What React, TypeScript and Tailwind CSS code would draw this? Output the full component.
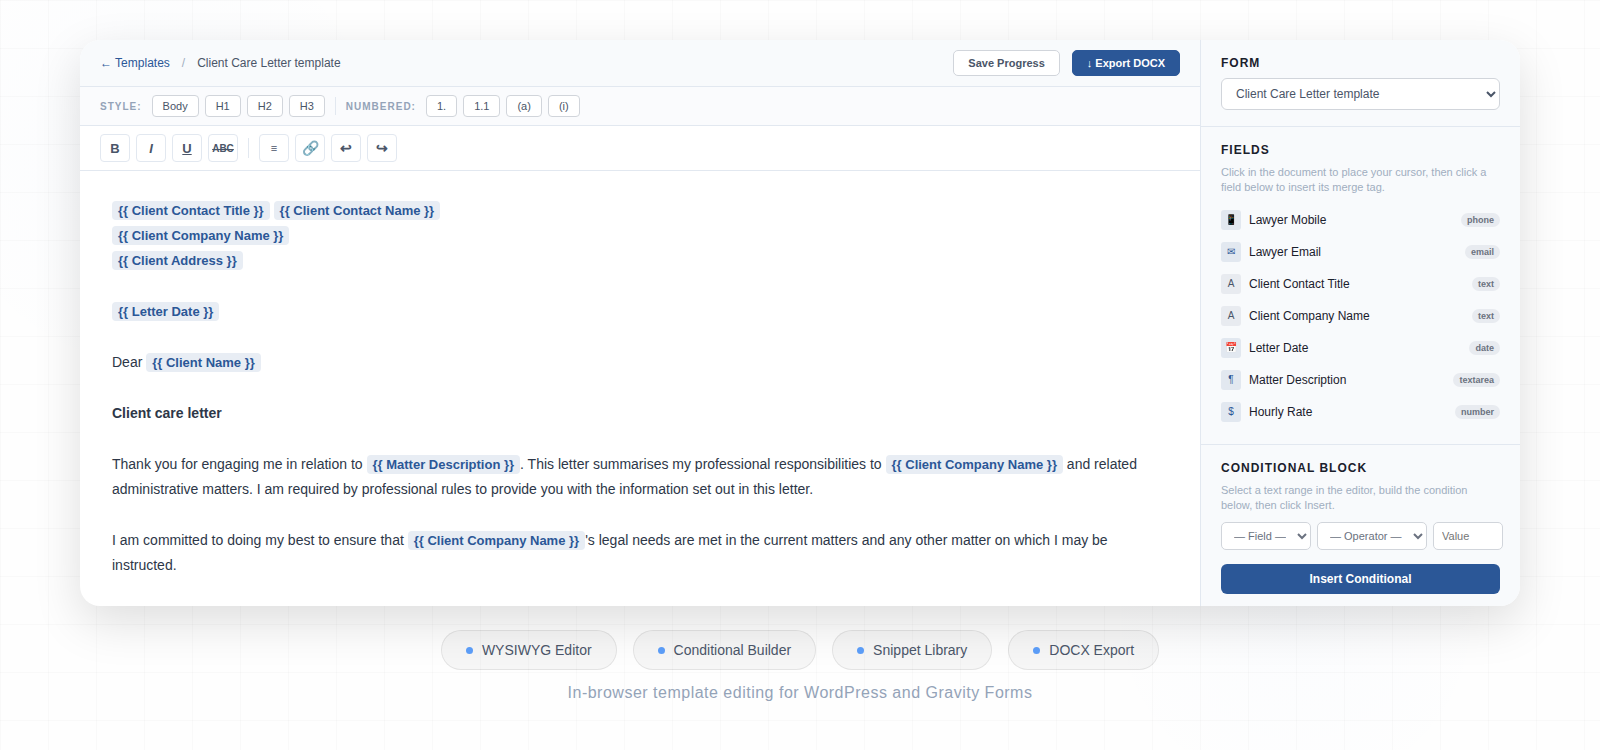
import { useState } from "react"
import type { ReactNode } from "react"

const fields = [
  { name: "Lawyer Mobile", type: "phone", icon: "📱" },
  { name: "Lawyer Email", type: "email", icon: "✉" },
  { name: "Client Contact Title", type: "text", icon: "A" },
  { name: "Client Company Name", type: "text", icon: "A" },
  { name: "Letter Date", type: "date", icon: "📅" },
  { name: "Matter Description", type: "textarea", icon: "¶" },
  { name: "Hourly Rate", type: "number", icon: "$" },
]

const textStyles = ["Body", "H1", "H2", "H3"]
const numberStyles = ["1.", "1.1", "(a)", "(i)"]

const formatTools = [
  { label: "Bold", content: "B", className: "text-[13px]" },
  { label: "Italic", content: "I", className: "text-[13px] italic" },
  { label: "Underline", content: "U", className: "text-[13px] underline" },
  { label: "Strikethrough", content: "ABC", className: "text-[10px] leading-[11px] line-through" },
]

const insertTools = [
  { label: "Align", content: "≡", className: "text-[11px]" },
  { label: "Link", content: "🔗", className: "text-[14px]" },
  { label: "Undo", content: "↩", className: "text-[14px]" },
  { label: "Redo", content: "↪", className: "text-[14px]" },
]

const features = ["WYSIWYG Editor", "Conditional Builder", "Snippet Library", "DOCX Export"]

function Tag({ children }: { children: string }) {
  return (
    <span className="rounded-[4px] bg-[#e8edf4] px-1.5 py-0.5 text-[13px] font-bold text-[#2b5797]">
      {`{{ ${children} }}`}
    </span>
  )
}

function StyleButton({ children }: { children: string }) {
  return (
    <button className="h-[22px] rounded-[4px] border border-[#d1d5db] bg-white px-2.5 text-[11px] leading-none text-[#4a5568]">
      {children}
    </button>
  )
}

function ToolButton({ tool }: { tool: { label: string; content: string; className: string } }) {
  return (
    <button
      aria-label={tool.label}
      className="flex h-7 w-[30px] items-center justify-center rounded-[4px] border border-[#e2e8f0] bg-white font-bold leading-none text-[#4a5568]"
    >
      <span className={tool.className}>{tool.content}</span>
    </button>
  )
}

function BarLabel({ children }: { children: string }) {
  return <span className="mr-1 text-[10px] font-bold tracking-[1px] text-[#94a3b8]">{children}</span>
}

function PanelTitle({ children }: { children: ReactNode }) {
  return <h2 className="mb-2 text-[12px] font-bold leading-[14px] tracking-[1px] text-[#1a202c]">{children}</h2>
}

function PanelHelp({ children }: { children: ReactNode }) {
  return <p className="mb-[9px] text-[11px] leading-[15px] text-[#a0aec0]">{children}</p>
}

export default function App() {
  const [form, setForm] = useState("Client Care Letter template")
  const [value, setValue] = useState("")

  return (
    <div className="min-h-screen bg-[#fefefe] bg-[radial-gradient(circle_at_10%_20%,rgba(59,130,246,0.02),transparent_240px),radial-gradient(circle_at_81%_82%,rgba(59,130,246,0.015),transparent_200px)] font-['Liberation_Sans',Arial,sans-serif]">
      <div className="min-h-screen bg-[linear-gradient(rgba(0,0,0,0.02)_1px,transparent_1px),linear-gradient(90deg,rgba(0,0,0,0.02)_1px,transparent_1px)] bg-[length:48px_48px] px-20 py-10">
        <div className="flex overflow-hidden rounded-[20px] bg-white shadow-[0_16px_48px_rgba(0,0,0,0.13)]">
          {/* Editor */}
          <main className="min-w-0 flex-1">
            <header className="flex items-center justify-between border-b border-[#e2e8f0] bg-[#f8fafc] px-5 py-2.5">
              <nav className="flex items-center gap-3 text-[12px] leading-none text-[#4a5568]">
                <a href="#templates" className="text-[#2b5797]">
                  ← Templates
                </a>
                <span className="text-[#a0aec0]">/</span>
                <span>Client Care Letter template</span>
              </nav>
              <div className="flex gap-3 text-[11px] font-bold leading-none">
                <button className="h-[26px] rounded-[5px] border border-[#d1d5db] bg-white px-3.5 text-[#4a5568]">
                  Save Progress
                </button>
                <button className="h-[26px] rounded-[5px] border border-[#2b5797] bg-[#2b5797] px-3.5 text-white">
                  ↓ Export DOCX
                </button>
              </div>
            </header>

            <div className="flex items-center gap-1.5 border-b border-[#e2e8f0] bg-[#fafbfd] px-5 py-2">
              <BarLabel>STYLE:</BarLabel>
              {textStyles.map((style) => (
                <StyleButton key={style}>{style}</StyleButton>
              ))}
              <span className="mx-1 h-[18px] w-px bg-[#e2e8f0]" />
              <BarLabel>NUMBERED:</BarLabel>
              {numberStyles.map((style) => (
                <StyleButton key={style}>{style}</StyleButton>
              ))}
            </div>

            <div className="flex items-center gap-1.5 border-b border-[#e2e8f0] bg-white px-5 py-2">
              {formatTools.map((tool) => (
                <ToolButton key={tool.label} tool={tool} />
              ))}
              <span className="mx-1 h-5 w-px bg-[#e2e8f0]" />
              {insertTools.map((tool) => (
                <ToolButton key={tool.label} tool={tool} />
              ))}
            </div>

            <article className="flex flex-col gap-[26px] px-8 py-[27px] text-[14px] leading-[25px] text-[#2d3748]">
              <p>
                <Tag>Client Contact Title</Tag> <Tag>Client Contact Name</Tag>
                <br />
                <Tag>Client Company Name</Tag>
                <br />
                <Tag>Client Address</Tag>
              </p>
              <p>
                <Tag>Letter Date</Tag>
              </p>
              <p>
                Dear <Tag>Client Name</Tag>
              </p>
              <p className="font-bold">Client care letter</p>
              <p>
                Thank you for engaging me in relation to <Tag>Matter Description</Tag>. This letter summarises my
                professional responsibilities to <Tag>Client Company Name</Tag> and related administrative matters. I
                am required by professional rules to provide you with the information set out in this letter.
              </p>
              <p>
                I am committed to doing my best to ensure that <Tag>Client Company Name</Tag>'s legal needs are met in
                the current matters and any other matter on which I may be instructed.
              </p>
            </article>
          </main>

          {/* Sidebar */}
          <aside className="w-80 shrink-0 border-l border-[#e2e8f0] bg-[#f8fafc]">
            <section className="border-b border-[#e2e8f0] px-5 py-4">
              <PanelTitle>
                <label htmlFor="form">FORM</label>
              </PanelTitle>
              <select
                id="form"
                value={form}
                onChange={(e) => setForm(e.target.value)}
                className="block h-8 w-full rounded-[6px] border border-[#d1d5db] bg-white px-2.5 text-[12px] text-[#4a5568]"
              >
                <option>Client Care Letter template</option>
              </select>
            </section>

            <section className="border-b border-[#e2e8f0] px-5 py-4">
              <PanelTitle>FIELDS</PanelTitle>
              <PanelHelp>
                Click in the document to place your cursor, then click a field below to insert its merge tag.
              </PanelHelp>
              {fields.map((field) => (
                <button key={field.name} className="flex w-full items-center gap-2 py-1.5 text-left">
                  <span
                    className={`flex size-5 items-center justify-center rounded-[3px] text-[10px] leading-none ${
                      field.type === "text" ? "bg-[#e8ebf0] text-[#4a5568]" : "bg-[#e2e8f0] text-[#2b5797]"
                    }`}
                  >
                    {field.icon}
                  </span>
                  <span className="flex-1 text-[12px] leading-5 text-[#1a202c]">{field.name}</span>
                  <span className="rounded-full bg-[#e8ebf0] px-1.5 text-[9px] font-bold leading-[14px] text-[#6b7280]">
                    {field.type}
                  </span>
                </button>
              ))}
            </section>

            <section className="px-5 pt-4 pb-3">
              <PanelTitle>CONDITIONAL BLOCK</PanelTitle>
              <PanelHelp>Select a text range in the editor, build the condition below, then click Insert.</PanelHelp>
              <div className="mb-3.5 flex gap-1.5 text-[11px] text-[#6b7280]">
                <select
                  aria-label="Field"
                  className="h-7 w-[90px] shrink-0 rounded-[5px] border border-[#d1d5db] bg-white px-2"
                >
                  <option>— Field —</option>
                </select>
                <select
                  aria-label="Operator"
                  className="h-7 w-[110px] shrink-0 rounded-[5px] border border-[#d1d5db] bg-white px-2"
                >
                  <option>— Operator —</option>
                </select>
                <input
                  aria-label="Value"
                  placeholder="Value"
                  value={value}
                  onChange={(e) => setValue(e.target.value)}
                  className="h-7 w-[70px] shrink-0 rounded-[5px] border border-[#d1d5db] bg-white px-2 placeholder:text-[#757575]"
                />
              </div>
              <button className="h-[30px] w-full rounded-[6px] bg-[#2b5797] text-[12px] font-bold leading-none text-white">
                Insert Conditional
              </button>
            </section>
          </aside>
        </div>

        {/* Feature pills */}
        <ul className="mt-6 flex flex-wrap justify-center gap-4">
          {features.map((feature) => (
            <li
              key={feature}
              className="flex h-10 items-center gap-[9px] rounded-full border border-black/8 bg-black/3 px-6 text-[14px] text-[#4a5568]"
            >
              <span className="size-[7px] rounded-full bg-[#5b9cf6]" />
              {feature}
            </li>
          ))}
        </ul>
        <p className="mt-3 text-center text-[16px] leading-[22px] tracking-[0.5px] text-[#94a3b8]">
          In-browser template editing for WordPress and Gravity Forms
        </p>
      </div>
    </div>
  )
}
